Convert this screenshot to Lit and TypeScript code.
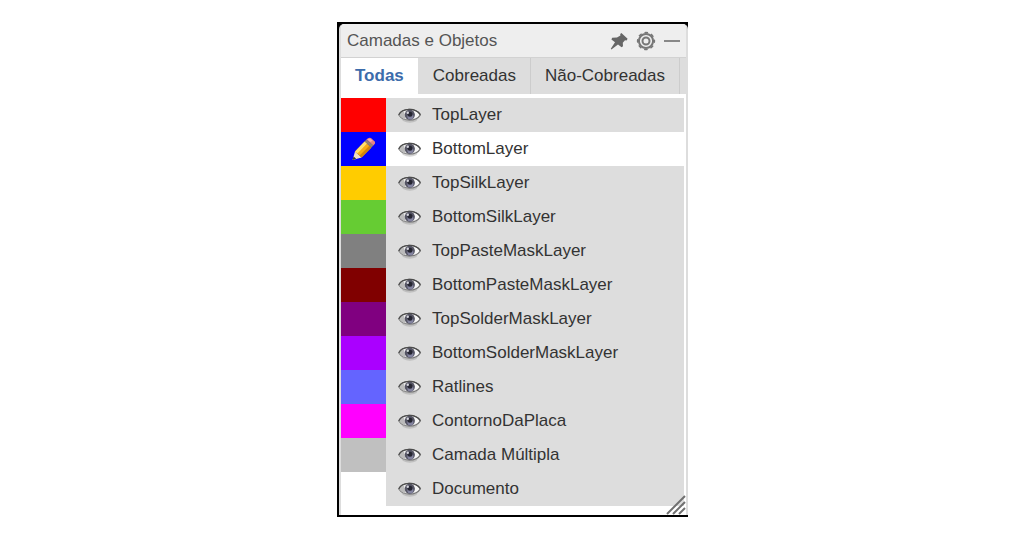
import { LitElement, html, css, svg } from "lit";
import { customElement, property, state } from "lit/decorators.js";
import { classMap } from "lit/directives/class-map.js";
import { styleMap } from "lit/directives/style-map.js";

interface Layer {
  name: string;
  color: string;
}

const LAYERS: Layer[] = [
  { name: "TopLayer", color: "#ff0000" },
  { name: "BottomLayer", color: "#0000ff" },
  { name: "TopSilkLayer", color: "#ffcc00" },
  { name: "BottomSilkLayer", color: "#66cc33" },
  { name: "TopPasteMaskLayer", color: "#808080" },
  { name: "BottomPasteMaskLayer", color: "#800000" },
  { name: "TopSolderMaskLayer", color: "#800080" },
  { name: "BottomSolderMaskLayer", color: "#aa00ff" },
  { name: "Ratlines", color: "#6464ff" },
  { name: "ContornoDaPlaca", color: "#ff00ff" },
  { name: "Camada Múltipla", color: "#c0c0c0" },
  { name: "Documento", color: "#ffffff" },
];

const TABS = ["Todas", "Cobreadas", "Não-Cobreadas"];

const pinIcon = svg`
  <svg width="18" height="18" viewBox="0 0 18 18" aria-hidden="true">
    <path fill="#666" d="M11.4 1 L17.6 6.8 L16.6 8.4 L15 8.2 L12.8 10.8 L13 14.2 L11.6 15.2 L8 12.4 L1.4 17.4 L0.8 16.8 L5 10.2 L1.4 7.4 L2.2 5.8 L7 5.6 L10.4 3.6 L10.2 2 Z"/>
  </svg>`;

const gearIcon = svg`
  <svg width="20" height="20" viewBox="0 0 20 20" aria-hidden="true" fill="none" stroke="#777">
    <circle cx="10" cy="10" r="7.1" stroke-width="2"/>
    <circle cx="10" cy="10" r="8.4" stroke-width="1.5" stroke-dasharray="3.6 3" stroke-dashoffset="1.8"/>
    <circle cx="10" cy="10" r="3.5" stroke-width="2"/>
  </svg>`;

const minimizeIcon = svg`
  <svg width="16" height="16" viewBox="0 0 16 16" aria-hidden="true">
    <rect x="0" y="7" width="16" height="2" fill="#888"/>
  </svg>`;

const eyeIcon = svg`
  <svg width="24" height="18" viewBox="0 0 24 18" aria-hidden="true">
    <path d="M3 12 Q12 18 20 12 L18.5 15 Q12 18.4 5 15 Z" fill="#888" opacity=".35"/>
    <path d="M0.8 9 C4.5 1.8 17.5 1.4 22.4 8.8 C18 15.6 5.5 16 0.8 9 Z" fill="#f6f6f6" stroke="#777" stroke-width="1.2"/>
    <path d="M0.8 8.8 C4.5 1.8 17.5 1.4 22.4 8.6" fill="none" stroke="#4c4c4c" stroke-width="1.4"/>
    <path d="M1.4 9.2 C2.8 11.6 5 13 7.6 13.6 L6 5 C4 6 2.4 7.4 1.4 9.2 Z" fill="#bbb"/>
    <circle cx="11.8" cy="8.8" r="5.1" fill="#555564"/>
    <circle cx="12.4" cy="10.4" r="3" fill="#8484a0"/>
    <circle cx="12" cy="8.2" r="2.5" fill="#262632"/>
    <circle cx="9.8" cy="6.8" r="1.2" fill="#d4d4dc"/>
  </svg>`;

const pencilIcon = svg`
  <svg width="24" height="24" viewBox="0 0 24 24" aria-hidden="true">
    <path d="M0.6 23 L3 14.4 L9.6 20.4 Z" fill="#f3dfc0"/>
    <path d="M0.6 23 L1.6 19.6 L4.2 21.8 Z" fill="#333"/>
    <path d="M3 14.4 L12.6 4.4 L19.4 10.6 L9.6 20.4 Z" fill="#f7ac14"/>
    <path d="M3 14.4 L12.6 4.4 L15 6.6 L5.4 16.6 Z" fill="#ffe070"/>
    <path d="M7.6 18.6 L17.4 8.8 L19.4 10.6 L9.6 20.4 Z" fill="#cf8410"/>
    <path d="M12.6 4.4 L14.4 2.4 L21.4 8.6 L19.4 10.6 Z" fill="#94846c"/>
    <path d="M14.4 2.4 Q16.6 0 19 1 L23 4.8 Q23.8 6.4 21.4 8.6 Z" fill="#e58482"/>
    <path d="M15.4 2.4 Q17 1.2 18.6 2 L20.6 3.8 L18.4 5 Z" fill="#f5b0ac"/>
  </svg>`;

const gripIcon = svg`
  <svg width="20" height="20" viewBox="0 0 20 20" aria-hidden="true" fill="none" stroke="#707070" stroke-width="2">
    <path d="M1 19 L19 1 M7 19 L19 7 M13 19 L19 13"/>
  </svg>`;

@customElement("layer-row")
export class LayerRow extends LitElement {
  @property() name = "";
  @property() color = "";
  @property({ type: Boolean }) active = false;
  @state() private shown = true;

  static styles = css`
    :host {
      display: flex;
      height: 34px;
    }
    button {
      font: inherit;
      color: inherit;
      border: 0;
      padding: 0;
      margin: 0;
      background: none;
      cursor: pointer;
    }
    svg {
      display: block;
    }
    .swatch {
      flex: 0 0 45px;
      display: grid;
      place-items: center;
    }
    .body {
      flex: 1;
      min-width: 0;
      display: flex;
      align-items: center;
      gap: 10px;
      padding-left: 12px;
      margin-right: 2px;
      background: #ddd;
    }
    .body.active {
      background: #fff;
    }
    .eye.off {
      opacity: 0.25;
    }
    .name {
      flex: 1;
      text-align: left;
      line-height: 34px;
    }
  `;

  private select() {
    this.dispatchEvent(new CustomEvent("layer-select", { detail: this.name }));
  }

  render() {
    return html`
      <button
        class="swatch"
        aria-label="Editar ${this.name}"
        style=${styleMap({ backgroundColor: this.color })}
        @click=${this.select}
      >
        ${this.active ? pencilIcon : null}
      </button>
      <div class=${classMap({ body: true, active: this.active })}>
        <button
          class=${classMap({ eye: true, off: !this.shown })}
          aria-label="Visibilidade de ${this.name}"
          aria-pressed=${this.shown ? "true" : "false"}
          @click=${() => (this.shown = !this.shown)}
        >
          ${eyeIcon}
        </button>
        <button class="name" @click=${this.select}>${this.name}</button>
      </div>
    `;
  }
}

@customElement("app-root")
export class AppRoot extends LitElement {
  @state() private tab = TABS[0];
  @state() private current = "BottomLayer";

  static styles = css`
    :host {
      display: flex;
      justify-content: center;
      box-sizing: border-box;
      min-height: 100vh;
      padding: 22px 0 20px 1px;
      align-items: flex-start;
      background: #fff;
      font-family: "Liberation Sans", Arial, sans-serif;
      font-size: 17px;
      color: #333;
    }
    button {
      font: inherit;
      color: inherit;
      border: 0;
      padding: 0;
      margin: 0;
      background: none;
      cursor: pointer;
    }
    svg {
      display: block;
    }
    .frame {
      box-sizing: border-box;
      width: 100%;
      max-width: 351px;
      background: #000;
      padding: 2px 0 2px 2px;
    }
    .panel {
      position: relative;
      background: #fff;
      border: solid #ddd;
      border-width: 0 2px;
      border-radius: 5px 5px 0 0;
      overflow: hidden;
    }
    .title {
      display: flex;
      align-items: center;
      height: 33px;
      padding: 0 6px;
      background: #eee;
      border-bottom: 1px solid #d2d2d2;
    }
    h1 {
      flex: 1;
      margin: 0;
      font-size: 17px;
      font-weight: 400;
      color: #555;
    }
    .tools {
      display: flex;
      align-items: center;
      gap: 8px;
    }
    .tabs {
      display: flex;
      height: 36px;
      background: #ddd;
    }
    .tab {
      padding: 0 14px;
      border-right: 1px solid #ccc;
      white-space: nowrap;
    }
    .tab.selected {
      background: #fff;
      border-right-color: #ddd;
      color: #3c6cab;
      font-weight: 700;
    }
    .layers {
      padding: 4px 0 9px;
    }
    .grip {
      position: absolute;
      right: 0;
      bottom: 0;
    }
  `;

  render() {
    return html`
      <div class="frame">
        <section class="panel">
          <header class="title">
            <h1>Camadas e Objetos</h1>
            <div class="tools">
              <button aria-label="Fixar">${pinIcon}</button>
              <button aria-label="Configurações">${gearIcon}</button>
              <button aria-label="Minimizar">${minimizeIcon}</button>
            </div>
          </header>
          <div class="tabs" role="tablist">
            ${TABS.map(
              (t) => html`<button
                role="tab"
                class=${classMap({ tab: true, selected: t === this.tab })}
                aria-selected=${t === this.tab ? "true" : "false"}
                @click=${() => (this.tab = t)}
              >${t}</button>`
            )}
          </div>
          <div class="layers">
            ${LAYERS.map(
              (l) => html`<layer-row
                .name=${l.name}
                .color=${l.color}
                .active=${l.name === this.current}
                @layer-select=${() => (this.current = l.name)}
              ></layer-row>`
            )}
          </div>
          <div class="grip">${gripIcon}</div>
        </section>
      </div>
    `;
  }
}
